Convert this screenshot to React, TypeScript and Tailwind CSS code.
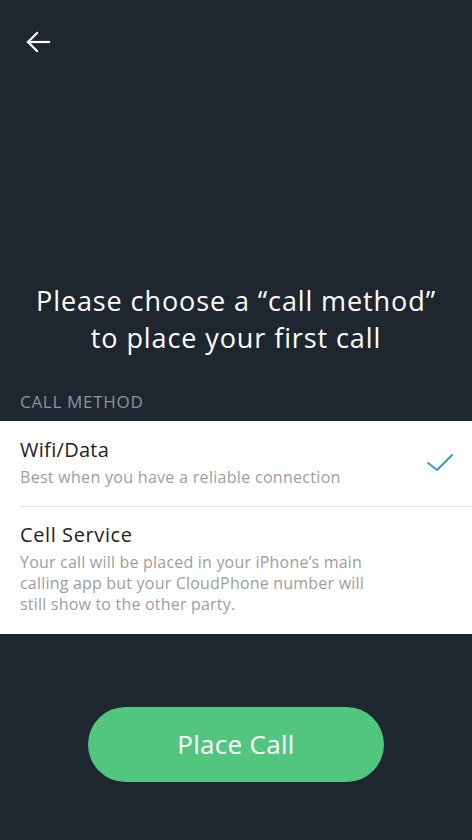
import React from "react";

/**
 * CallMethodScreen — first-call onboarding: pick "Wifi/Data" or "Cell Service".
 * Dark slate background, white option list, green pill "Place Call" button.
 */

const FONT = { fontFamily: "'Open Sans', 'Noto Sans', 'Liberation Sans', sans-serif" };

function BackArrow() {
  return (
    <svg width="26" height="24" viewBox="0 0 26 24" fill="none" stroke="#fff" strokeWidth="2.2" strokeLinecap="square">
      <path d="M3 12 H24" />
      <path d="M12 3 L3 12 L12 21" />
    </svg>
  );
}

function Check() {
  return (
    <svg width="28" height="20" viewBox="0 0 28 20" fill="none" stroke="#2a9fd8" strokeWidth="2" strokeLinecap="round" strokeLinejoin="round">
      <path d="M2 10 L11 17 L26 2" />
    </svg>
  );
}

export default function App() {
  return (
    <div className="flex h-[840px] w-full flex-col overflow-hidden bg-[#1e2630]" style={FONT}>
      {/* Back */}
      <div className="pl-[25px] pt-[30px]">
        <BackArrow />
      </div>

      {/* Heading */}
      <h1 className="mt-[228px] text-center text-[27px] leading-[37px] font-normal tracking-[0.9px] text-white">
        Please choose a “call method”
        <br />
        to place your first call
      </h1>

      {/* Section label */}
      <div className="mt-[36px] px-5 text-[17px] leading-[20px] tracking-[0.7px] text-[#8d949c]">
        CALL METHOD
      </div>

      {/* Options */}
      <div className="mt-[9px] bg-white">
        <div className="flex items-center pb-[18px] pl-5 pr-[18px] pt-[17px]">
          <div className="flex-1">
            <div className="text-[20px] leading-[24px] tracking-[0.3px] text-[#222]">Wifi/Data</div>
            <div className="mt-[5px] text-[16px] leading-[21px] tracking-[0.3px] text-[#9d9d9d]">
              Best when you have a reliable connection
            </div>
          </div>
          <Check />
        </div>
        <div className="ml-5 h-px bg-[#e2e2e2]" />
        <div className="pb-[19px] pl-5 pr-5 pt-[16px]">
          <div className="text-[20px] leading-[24px] tracking-[0.6px] text-[#222]">Cell Service</div>
          <div className="mt-[5px] text-[16px] leading-[21px] tracking-[0.2px] text-[#9d9d9d]">
            Your call will be placed in your iPhone’s main
            <br />
            calling app but your CloudPhone number will
            <br />
            still show to the other party.
          </div>
        </div>
      </div>

      {/* Action */}
      <button
        type="button"
        className="mx-auto mt-[73px] h-[75px] w-[296px] rounded-full bg-[#52c67f] text-[26px] tracking-[0.3px] text-white"
      >
        Place Call
      </button>
    </div>
  );
}
